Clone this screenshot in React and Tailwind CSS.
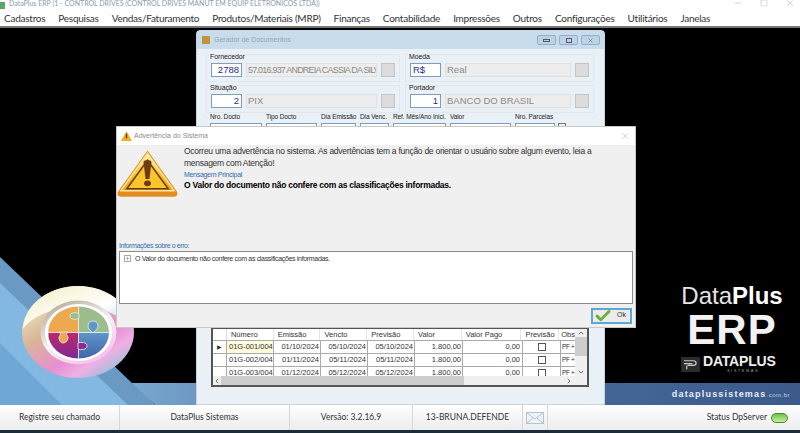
import { Check, Minus, Square, X, Plus, ChevronUp, ChevronDown, ChevronLeft, ChevronRight } from 'lucide-react';

const menus = ['Cadastros', 'Pesquisas', 'Vendas/Faturamento', 'Produtos/Materiais (MRP)', 'Finanças', 'Contabilidade', 'Impressões', 'Outros', 'Configurações', 'Utilitários', 'Janelas'];

const rows = [
  ['01G-001/004', '01/10/2024', '05/10/2024', '05/10/2024', '1.800,00', '0,00'],
  ['01G-002/004', '01/11/2024', '05/11/2024', '05/11/2024', '1.800,00', '0,00'],
  ['01G-003/004', '01/12/2024', '05/12/2024', '05/12/2024', '1.800,00', '0,00'],
];

function Lookup({ label, code, text, left, tight, w = 'w-[189px]' }) {
  return (
    <div className={`${w} h-[28px] border border-[#dfe8f0] relative`}>
      <span className="absolute left-[3px] -top-[3px] text-[7px] leading-[9px] tracking-[-0.1px] text-[#222]">{label}</span>
      <div className="flex items-center gap-[4px] px-[4px] pt-[8px]">
        <div className={`w-[31px] h-[14px] shrink-0 bg-white border border-[#7f9db9] px-[2px] text-[9.5px] leading-[12px] text-[#2b2b8c] ${left ? 'text-left' : 'text-right'}`}>{code}</div>
        <div className={`flex-1 h-[14px] min-w-0 overflow-hidden whitespace-nowrap bg-[#ededed] border border-[#e0e0e0] px-[1px] leading-[12px] text-[#8a8a8a] ${tight ? 'text-[9px] tracking-[-0.8px]' : 'text-[9.5px]'}`}>{text}</div>
        <div className="w-[14px] h-[14px] shrink-0 bg-[#dcdcdc] border border-[#c4c4c4]" />
      </div>
    </div>
  );
}

function SmallField({ label, w, value }) {
  return (
    <div className={`${w} shrink-0`}>
      <div className="text-[6.5px] leading-[9px] mb-[2px] tracking-[-0.1px] text-[#222] whitespace-nowrap">{label}</div>
      <div className="h-[14px] bg-white border border-[#7f9db9] text-right pr-[1px] text-[9px] leading-[12px] text-[#2b2b8c]">{value}</div>
    </div>
  );
}

function Grid() {
  const cols = ['w-[47px]', 'w-[47px]', 'w-[47px]', 'w-[47px]', 'w-[48px]', 'w-[60px]', 'w-[38px]'];
  const head = ['Número', 'Emissão', 'Vencto', 'Previsão', 'Valor', 'Valor Pago', 'Previsão'];
  return (
    <div className="mt-auto ml-[14px] mr-[15px] h-[60px] border-2 border-[#555] bg-white flex flex-col text-[7.5px] text-[#333] overflow-hidden whitespace-nowrap">
      <div className="flex flex-1 min-h-0">
        <div className="flex-1 min-w-0">
          <div className="flex h-[11px] leading-[11px]">
            <div className="w-[14px] border-r border-[#ddd]" />
            {head.map((h, i) => (
              <div key={i} className={`${cols[i]} pl-[4px] border-r border-[#e4e4e4]`}>{h}</div>
            ))}
            <div className="flex-1 pl-[2px]">Obs</div>
          </div>
          {rows.map((r, n) => (
            <div key={r[0]} className="flex h-[13px] leading-[12px] border-t border-[#aaa]">
              <div className="w-[14px] border-r border-[#aaa] flex items-center justify-center text-[6px]">{n === 0 ? '▶' : ''}</div>
              <div className={`${cols[0]} px-[2px] border-r border-[#aaa] ${n === 0 ? 'bg-[#fffbdc]' : ''}`}>{r[0]}</div>
              <div className={`${cols[1]} px-[1px] text-right border-r border-[#aaa]`}>{r[1]}</div>
              <div className={`${cols[2]} px-[1px] text-right border-r border-[#aaa]`}>{r[2]}</div>
              <div className={`${cols[3]} px-[1px] text-right border-r border-[#aaa]`}>{r[3]}</div>
              <div className={`${cols[4]} px-[1px] text-right border-r border-[#aaa]`}>{r[4]}</div>
              <div className={`${cols[5]} px-[2px] text-right border-r border-[#aaa]`}>{r[5]}</div>
              <div className={`${cols[6]} border-r border-[#aaa] flex items-center justify-center`}>
                <div className="w-[8px] h-[8px] border border-[#555]" />
              </div>
              <div className="flex-1 pl-[1px] overflow-hidden text-[6.5px] tracking-[-0.4px]">PF + (</div>
            </div>
          ))}
        </div>
        <div className="w-[12px] bg-[#f0f0f0] flex flex-col items-center justify-between">
          <ChevronUp size={8} strokeWidth={2} />
          <div className="w-full h-[19px] bg-[#cdcdcd] mb-auto" />
          <ChevronDown size={8} strokeWidth={2} />
        </div>
      </div>
      <div className="h-[9px] shrink-0 bg-[#f0f0f0] flex items-center">
        <ChevronLeft size={8} strokeWidth={2} className="shrink-0" />
        <div className="w-[243px] h-full bg-[#cdcdcd]" />
        <div className="flex-1" />
        <ChevronRight size={8} strokeWidth={2} className="shrink-0 mr-[14px]" />
      </div>
    </div>
  );
}

function PuzzleLogo() {
  return (
    <svg viewBox="0 0 116 96" className="absolute left-[21px] top-[257px] w-[116px] h-[96px]">
      <defs>
        <linearGradient id="rim" x1="0.1" y1="0.1" x2="0.8" y2="1">
          <stop offset="0" stopColor="#f1ecc0" />
          <stop offset="0.35" stopColor="#d8b596" />
          <stop offset="0.65" stopColor="#e88fd2" />
          <stop offset="0.8" stopColor="#eeb0e4" />
          <stop offset="1" stopColor="#8cc2da" />
        </linearGradient>
        <linearGradient id="rimTop" x1="0.1" y1="0" x2="1" y2="0.9">
          <stop offset="0" stopColor="#f5efc8" />
          <stop offset="0.6" stopColor="#ffffff" />
          <stop offset="1" stopColor="#9fcbe0" />
        </linearGradient>
        <linearGradient id="inner" x1="0.2" y1="0" x2="0.8" y2="1">
          <stop offset="0" stopColor="#b8ab98" />
          <stop offset="0.5" stopColor="#f4f4f4" />
          <stop offset="1" stopColor="#f7b8ee" />
        </linearGradient>
        <linearGradient id="purple" x1="0" y1="0" x2="0" y2="1">
          <stop offset="0" stopColor="#c0286a" />
          <stop offset="1" stopColor="#7a2a98" />
        </linearGradient>
        <linearGradient id="blue" x1="0" y1="0" x2="0" y2="1">
          <stop offset="0" stopColor="#5f96c8" />
          <stop offset="1" stopColor="#3f66a8" />
        </linearGradient>
        <clipPath id="piece">
          <ellipse cx="57.5" cy="47.5" rx="30.5" ry="26" />
        </clipPath>
      </defs>
      <ellipse cx="57" cy="47" rx="56" ry="46" fill="url(#rim)" />
      <path d="M2 44C4 18 30 1 57 1c30 0 55 20 55 46-8-16-30-25-54-25C34 22 12 30 2 44z" fill="url(#rimTop)" />
      <ellipse cx="57.5" cy="47.5" rx="38" ry="32" fill="url(#inner)" />
      <ellipse cx="57.5" cy="47.5" rx="33.5" ry="28.5" fill="#ffffff" />
      <g clipPath="url(#piece)" stroke="#e8f0f6" strokeWidth="0.8">
        <rect x="27" y="21" width="30.5" height="26.5" fill="#eda94f" />
        <rect x="57.5" y="21" width="31" height="26.5" fill="#9cbd8c" />
        <rect x="27" y="47.5" width="30.5" height="26.5" fill="url(#purple)" />
        <rect x="57.5" y="47.5" width="31" height="26.5" fill="url(#blue)" />
        {/* knobs between the pieces */}
        <path d="M58 29c-3-2-9-2-9 2s6 4 9 2z" fill="#9cbd8c" />
        <path d="M72 48c-3-3-5-4-5-7 0-3 2-5 5-5s5 2 5 5c0 3-2 4-5 7z" fill="#5f96c8" />
        <path d="M38 47c3 3 0 3 0 6 0 3 2 5 4 5s5-2 5-5c0-3-3-3 0-6z" fill="#eda94f" />
        <path d="M57 58c3-1 9-1 9 3s-6 4-9 3z" fill="#8d2a90" />
      </g>
    </svg>
  );
}

function WarningIcon({ className }) {
  return (
    <svg viewBox="0 0 62 48" className={className}>
      <defs>
        <linearGradient id="warn" x1="0" y1="0" x2="0" y2="1">
          <stop offset="0" stopColor="#fff4a8" />
          <stop offset="0.6" stopColor="#fbbf1e" />
          <stop offset="1" stopColor="#f2950f" />
        </linearGradient>
      </defs>
      <path d="M31 0 61 42c1 3 0 5-3 5H4c-3 0-4-2-3-5z" fill="#e38b1f" />
      <path d="M31 3 58 41H4z" fill="url(#warn)" stroke="#fce9a0" strokeWidth="1.5" />
      <path d="M31 10 52 39H10z" fill="#f8c62c" stroke="#6b3a12" strokeWidth="1.5" />
      <path d="M27 12c0-3 8-3 8 0l-2 17h-4z" fill="#6e3b14" />
      <ellipse cx="31" cy="33.5" rx="3.5" ry="3" fill="#6e3b14" />
    </svg>
  );
}

export default function App() {
  return (
    <div className="w-[800px] h-[433px] overflow-hidden flex flex-col bg-black font-['Liberation_Sans',sans-serif]">
      {/* title bar */}
      <div className="h-[10px] bg-white flex items-center shrink-0 relative">
        <div className="w-[5px] h-[7px] bg-[#5aa86a] mr-[4px]" />
        <span className="text-[7px] leading-[9px] text-[#8b9bad] font-['Lato',sans-serif] whitespace-nowrap -mt-[3px]">DataPlus ERP (1 - CONTROL DRIVES  (CONTROL DRIVES MANUT EM EQUIP ELETRONICOS LTDA))</span>
        <div className="ml-auto flex items-center gap-[17px] pr-[5px] text-[#999] -mt-[5px]">
          <Minus size={10} strokeWidth={1} />
          <Square size={8} strokeWidth={1} />
          <X size={10} strokeWidth={1} />
        </div>
      </div>

      {/* menu */}
      <div className="h-[18px] shrink-0 bg-white border-b-2 border-[#777] flex items-center gap-[13px] pl-[4px] font-['Lato',sans-serif] text-[10px] tracking-[-0.25px] text-[#333] whitespace-nowrap">
        {menus.map(m => <span key={m}>{m}</span>)}
      </div>

      {/* desktop */}
      <div className="relative flex-1 min-h-0 bg-black overflow-hidden">
        <svg viewBox="0 0 800 377" className="absolute inset-0 w-[800px] h-[377px]">
          <defs>
            <linearGradient id="band" x1="0" y1="0" x2="1" y2="0">
              <stop offset="0" stopColor="#7aa8cf" />
              <stop offset="0.3" stopColor="#4f76a6" />
              <stop offset="1" stopColor="#3c5a8b" />
            </linearGradient>
          </defs>
          <path d="M130 355H800V377H155z" fill="url(#band)" />
          <path d="M0 229 155 377H0z" fill="#6a9ac4" />
          <path d="M0 255 128 377H0z" fill="#82b8e2" />
          <path d="M0 315 62 377H0z" fill="#6fa8d6" />
        </svg>

        <PuzzleLogo />

        <div className="absolute right-[17px] top-[254px] w-[102px] flex flex-col items-center text-white">
          <div className="text-[24px] leading-[28px] text-[#e4e4e4] whitespace-nowrap">Data<span className="font-bold text-white">Plus</span></div>
          <div className="text-[42px] leading-[36px] mt-[2px] font-bold tracking-[1px] text-[#f2f2f2]">ERP</div>
          <div className="mt-[7px] flex items-center gap-[3px] w-full">
            <svg viewBox="0 0 20 16" className="w-[19px] h-[15px] shrink-0">
              <rect width="20" height="16" fill="#2c2c2c" />
              <path d="M3 4h10c4 0 4 5 0 5H7M3 7h9M6 13V9" stroke="#ccc" strokeWidth="1.3" fill="none" />
            </svg>
            <div className="flex-1">
              <div className="text-[14px] leading-[13px] font-bold text-[#eee] tracking-[-0.2px]">DATAPLUS</div>
              <div className="text-[4px] leading-[5px] tracking-[1.5px] text-center text-[#999]">SISTEMAS</div>
            </div>
          </div>
        </div>

        <div className="absolute right-[10px] top-[360px] text-[9px] leading-[12px] font-bold tracking-[1.2px] text-[#e8eef6] whitespace-nowrap">
          dataplussistemas<span className="text-[6px] tracking-[0.5px] font-normal text-[#c4d0e0]">.com.br</span>
        </div>

        {/* Gerador de Documentos */}
        <div className="absolute left-[196px] top-[2px] w-[409px] h-[375px] rounded-t-[4px] bg-[#e9f0f6] border border-[#c4d6e6] flex flex-col">
          <div className="h-[18px] shrink-0 bg-[#c9dcec] flex items-center pl-[5px] pr-[4px]">
            <div className="w-[8px] h-[8px] bg-[#c4923a] mr-[4px]" />
            <span className="text-[7px] text-[#8ea3b8]">Gerador de Documentos</span>
            <div className="ml-auto flex gap-[3px]">
              <div className="w-[19px] h-[10px] rounded-[2px] bg-[#bcd2e6] border border-[#93aec8] flex items-center justify-center"><div className="w-[7px] h-[3px] border border-[#556]" /></div>
              <div className="w-[19px] h-[10px] rounded-[2px] bg-[#bcd2e6] border border-[#93aec8] flex items-center justify-center"><div className="w-[6px] h-[5px] border border-[#556]" /></div>
              <div className="w-[19px] h-[10px] rounded-[2px] bg-[#bcd2e6] border border-[#93aec8] flex items-center justify-center"><X size={7} strokeWidth={1.5} color="#556" /></div>
            </div>
          </div>
          <div className="grid grid-cols-[194px_189px] gap-x-[5px] gap-y-[3px] pl-[9px] pt-[5px]">
            <Lookup w="w-[194px]" label="Fornecedor" code="2788" tight text="57.016.937 ANDREIA CASSIA DA SILV" />
            <Lookup label="Moeda" code="R$" left text="Real" />
            <Lookup w="w-[194px]" label="Situação" code="2" text="PIX" />
            <Lookup label="Portador" code="1" text="BANCO DO BRASIL" />
          </div>
          <div className="flex items-end gap-[4px] pl-[13px] -mt-[1px]">
            <SmallField w="w-[52px]" label="Nro. Docto" value="01" />
            <SmallField w="w-[51px]" label="Tipo Docto" value="NF" />
            <SmallField w="w-[35px]" label="Dia Emissão" value="01" />
            <SmallField w="w-[29px]" label="Dia Venc." value="05" />
            <SmallField w="w-[53px]" label="Ref. Mês/Ano Inici." value="10/2024" />
            <SmallField w="w-[61px]" label="Valor" value="1.800,00" />
            <SmallField w="w-[40px]" label="Nro. Parcelas" value="4" />
            <div className="w-[8px] h-[8px] border border-[#777] mb-[6px] -ml-[1px]" />
          </div>
          <Grid />
          <div className="h-[17px] shrink-0" />
        </div>

        {/* Advertência do Sistema */}
        <div className="absolute left-[116px] top-[98px] w-[520px] h-[202px] bg-[#f0f0f0] border border-[#c8c8c8] flex flex-col">
          <div className="h-[18px] shrink-0 bg-white flex items-center pl-[4px] pr-[4px]">
            <svg viewBox="0 0 12 11" className="w-[11px] h-[10px] mr-[2px]">
              <path d="M6 0l6 11H0z" fill="#f2b01e" />
              <path d="M6 3v5" stroke="#5a3510" strokeWidth="1.5" />
            </svg>
            <span className="text-[7px] text-[#8c8c8c]">Advertência do Sistema</span>
            <X size={10} strokeWidth={1} color="#999" className="ml-auto mr-[1px]" />
          </div>
          <div className="flex flex-1 min-h-0">
            <WarningIcon className="w-[61px] h-[48px] mt-[5px] shrink-0" />
            <div className="pl-[6px] pt-[1px] w-[452px]">
              <p className="text-[8.5px] leading-[11.5px] tracking-[-0.27px] text-[#333] w-[412px]">Ocorreu uma advertência no sistema. As advertências tem a função de orientar o usuário sobre algum evento, leia a mensagem com Atenção!</p>
              <div className="text-[7px] leading-[10px] mt-[1px] tracking-[-0.3px] text-[#2f6fb0]">Mensagem Principal</div>
              <div className="text-[8.5px] leading-[11px] font-bold tracking-[-0.25px] text-black whitespace-nowrap">O Valor do documento não confere com as classificações informadas.</div>
            </div>
          </div>
          <div className="text-[7px] leading-[10px] tracking-[-0.4px] text-[#2f6fb0] pl-[2px]">Informações sobre o erro:</div>
          <div className="mx-[2px] h-[53px] bg-white border border-[#8c8c8c] shrink-0 flex items-start pl-[4px] pt-[1px]">
            <div className="w-[7px] h-[7px] border border-[#aaa] flex items-center justify-center mt-[2px] mr-[4px]"><Plus size={5} strokeWidth={2} color="#666" /></div>
            <span className="text-[7px] leading-[11px] tracking-[-0.33px] text-[#333] whitespace-nowrap">O Valor do documento não confere com as classificações informadas.</span>
          </div>
          <div className="h-[23px] shrink-0 flex justify-end items-center pr-[3px]">
            <div className="w-[41px] h-[16px] border-2 border-[#5aa7d8] bg-[#ececec] flex items-center justify-between pl-[1px] pr-[4px]">
              <Check size={18} strokeWidth={4} color="#6fae3c" />
              <span className="text-[7px] text-[#333]">Ok</span>
            </div>
          </div>
        </div>
      </div>

      {/* status bar */}
      <div className="h-[25px] shrink-0 bg-gradient-to-b from-white to-[#ececec] flex items-center text-[8.5px] text-[#333] font-['Lato',sans-serif] whitespace-nowrap">
        <div className="w-[120px] h-full flex items-center justify-center border-r border-[#d8d8d8]">Registre seu chamado</div>
        <div className="w-[170px] h-full flex items-center justify-center border-r border-[#d8d8d8]">DataPlus Sistemas</div>
        <div className="w-[123px] h-full flex items-center justify-center border-r border-[#d8d8d8]">Versão: 3.2.16.9</div>
        <div className="w-[110px] h-full flex items-center justify-center border-r border-[#d8d8d8]">13-BRUNA.DEFENDE</div>
        <div className="w-[25px] h-full flex items-center justify-center border-r border-[#d8d8d8]">
          <svg viewBox="0 0 18 12" className="w-[18px] h-[12px]">
            <rect x="0.5" y="0.5" width="17" height="11" fill="#eef3f8" stroke="#b4c4d6" />
            <path d="M1 1l8 6 8-6M1 11l6-5M17 11l-6-5" stroke="#b4c4d6" fill="none" />
          </svg>
        </div>
        <div className="ml-auto flex items-center gap-[4px] pr-[12px]">
          <span>Status DpServer</span>
          <div className="w-[17px] h-[10px] rounded-full border border-[#4d8a2a] bg-gradient-to-b from-[#6fc24a] to-[#c4f0a0]" />
        </div>
      </div>
      <div className="h-[3px] shrink-0 bg-[#1b2c3a]" />
    </div>
  );
}
